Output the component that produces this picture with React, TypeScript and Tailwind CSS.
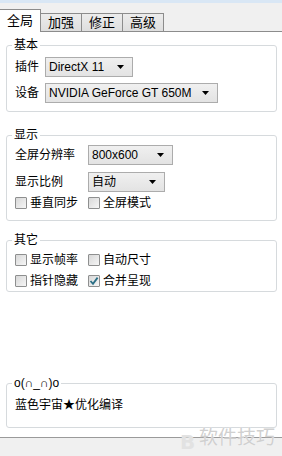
const font = "font-['Liberation_Sans','Noto_Sans_CJK_SC',sans-serif]";

function Combo({ value, width }: { value: string; width: string }) {
  return (
    <div
      className={`${width} h-[20px] border border-[#acacac] bg-gradient-to-b from-[#f0f0f0] to-[#e3e3e3] flex items-center justify-between pl-[3px] pr-[8px] text-[12px] text-black`}
    >
      <span className="leading-none">{value}</span>
      <svg width="7" height="4" viewBox="0 0 7 4">
        <path d="M0 0 H7 L3.5 4 Z" fill="#000" />
      </svg>
    </div>
  );
}

function Check({ label, checked = false }: { label: string; checked?: boolean }) {
  return (
    <div className="flex items-center gap-[3px] text-[12px] leading-none text-black">
      <span className="w-[12px] h-[12px] border border-[#8e8f8f] rounded-[1px] bg-gradient-to-br from-[#d8d8d8] to-[#f6f6f6] flex items-center justify-center">
        {checked && (
          <svg width="10" height="10" viewBox="0 0 10 10">
            <path d="M1.5 5 L4 7.8 L8.6 1.6" fill="none" stroke="#2b6f86" strokeWidth="1.8" />
          </svg>
        )}
      </span>
      <span>{label}</span>
    </div>
  );
}

function Group({
  title,
  className = "",
  children,
}: {
  title: string;
  className?: string;
  children: React.ReactNode;
}) {
  return (
    <fieldset className={`ml-[6px] mr-[5px] border border-[#d6dadd] rounded-[3px] ${className}`}>
      <legend className="ml-[5px] px-[2px] text-[12px] leading-[14px] text-black">{title}</legend>
      {children}
    </fieldset>
  );
}

export default function App() {
  return (
    <div className={`relative w-[282px] h-[456px] bg-[#f0f0f0] overflow-hidden ${font}`}>
      <div className="h-[3px] bg-[#d9e7f5]" />

      <div className="h-[29px] flex items-end border-b border-[#8c8c8c]">
        <div className="w-[41px] h-[23px] -mb-px bg-white border-t border-r border-[#8c8c8c] flex items-center justify-center text-[13px] text-black z-10">
          全局
        </div>
        {["加强", "修正", "高级"].map((t) => (
          <div
            key={t}
            className="w-[41px] h-[18px] bg-gradient-to-b from-[#ececec] to-[#dedede] border-t border-r border-[#8c8c8c] flex items-center justify-center text-[13px] text-black"
          >
            {t}
          </div>
        ))}
      </div>

      <div className="h-[405px] bg-white flex flex-col pt-[6px]">
        <Group title="基本" className="pb-[8px]">
          <div className="flex flex-col gap-[6px] pl-[8px] pt-[5px]">
            <div className="flex items-center gap-[6px] text-[12px] text-black">
              <span className="w-[24px]">插件</span>
              <Combo value="DirectX 11" width="w-[88px]" />
            </div>
            <div className="flex items-center gap-[6px] text-[12px] text-black">
              <span className="w-[24px]">设备</span>
              <Combo value="NVIDIA GeForce GT 650M" width="w-[173px]" />
            </div>
          </div>
        </Group>

        <Group title="显示" className="mt-[16px] pb-[11px]">
          <div className="flex flex-col pl-[8px] pt-[3px]">
            <div className="flex items-center text-[12px] text-black">
              <span className="w-[73px]">全屏分辨率</span>
              <Combo value="800x600" width="w-[85px]" />
            </div>
            <div className="flex items-center text-[12px] text-black mt-[7px]">
              <span className="w-[73px]">显示比例</span>
              <Combo value="自动" width="w-[77px]" />
            </div>
            <div className="flex items-center mt-[5px]">
              <div className="w-[73px]">
                <Check label="垂直同步" />
              </div>
              <Check label="全屏模式" />
            </div>
          </div>
        </Group>

        <Group title="其它" className="mt-[12px] pb-[4px]">
          <div className="flex flex-col gap-[9px] pl-[8px] pt-[7px]">
            <div className="flex items-center">
              <div className="w-[73px]">
                <Check label="显示帧率" />
              </div>
              <Check label="自动尺寸" />
            </div>
            <div className="flex items-center">
              <div className="w-[73px]">
                <Check label="指针隐藏" />
              </div>
              <Check label="合并呈现" checked />
            </div>
          </div>
        </Group>

        <div className="flex-1" />

        <Group title="o(∩_∩)o" className="mb-[9px] h-[52px]">
          <div className="pl-[8px] pt-[8px] text-[12px] leading-[14px] text-black">蓝色宇宙★优化编译</div>
        </Group>
      </div>

      <div className="h-px bg-[#9a9a9a]" />

      <div className="absolute left-[180px] top-[432px] text-[20px] leading-none font-bold text-[#e2e2e2] font-['DejaVu_Sans',sans-serif]">
        B
      </div>
      <div className="absolute left-[199px] top-[426px] text-[19px] leading-none text-[#d0d0d0] font-['Noto_Sans_CJK_SC',sans-serif] [text-shadow:0_0_1px_#fff]">
        软件技巧
      </div>
    </div>
  );
}
